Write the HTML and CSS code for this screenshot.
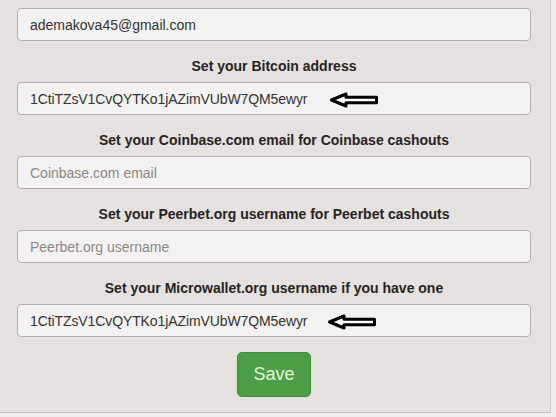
FILE: index.html
```html
<!DOCTYPE html>
<html>
<head>
<meta charset="utf-8">
<link rel="stylesheet" href="styles.css">
</head>
<body>
<div class="panel">
  <form class="form">
    <div class="field first">
      <div class="input"><span class="value">ademakova45@gmail.com</span></div>
    </div>
    <div class="field">
      <label class="label">Set your Bitcoin address</label>
      <div class="input">
        <span class="value addr">1CtiTZsV1CvQYTKo1jAZimVUbW7QM5ewyr</span>
        <svg class="arrow" width="50" height="16" viewBox="0 0 50 16"><path d="M2.5 8 L17 2 L17 5.2 L47.5 5.2 L47.5 10.8 L17 10.8 L17 14 Z" fill="#fff" stroke="#000" stroke-width="3" stroke-linejoin="round"/></svg>
      </div>
    </div>
    <div class="field">
      <label class="label">Set your Coinbase.com email for Coinbase cashouts</label>
      <div class="input"><span class="placeholder">Coinbase.com email</span></div>
    </div>
    <div class="field">
      <label class="label">Set your Peerbet.org username for Peerbet cashouts</label>
      <div class="input"><span class="placeholder">Peerbet.org username</span></div>
    </div>
    <div class="field">
      <label class="label">Set your Microwallet.org username if you have one</label>
      <div class="input">
        <span class="value addr">1CtiTZsV1CvQYTKo1jAZimVUbW7QM5ewyr</span>
        <svg class="arrow arrow2" width="50" height="16" viewBox="0 0 50 16"><path d="M2.5 8 L17 2 L17 5.2 L47.5 5.2 L47.5 10.8 L17 10.8 L17 14 Z" fill="#fff" stroke="#000" stroke-width="3" stroke-linejoin="round"/></svg>
      </div>
    </div>
    <div class="actions">
      <button type="button" class="save">Save</button>
    </div>
  </form>
</div>
</body>
</html>
```
FILE: styles.css
```css
html, body {
  margin: 0;
  padding: 0;
  background: #efeeec;
}
body {
  font-family: "Liberation Sans", Arial, sans-serif;
  width: 556px;
  height: 417px;
  overflow: hidden;
}
.panel {
  width: 550px;
  height: 412px;
  background: #e4e1de;
  border-right: 1px solid #c9c6c3;
  border-bottom: 1px solid #c0bdba;
  box-sizing: content-box;
}
.form {
  display: flex;
  flex-direction: column;
  padding: 8px 0 0 17px;
  width: 514px;
}
.field {
  display: flex;
  flex-direction: column;
  margin-top: 16px;
}
.field.first {
  margin-top: 0;
}
.label {
  font-weight: bold;
  font-size: 14px;
  line-height: 18px;
  color: #28231f;
  text-align: center;
  margin-bottom: 7px;
}
.input {
  position: relative;
  height: 33px;
  box-sizing: border-box;
  border: 1px solid #b2afac;
  border-radius: 4px;
  background: #f3f2f0;
  display: flex;
  align-items: center;
  padding: 0 12px;
  font-size: 14px;
}
.value {
  color: #333;
}
.addr {
  letter-spacing: -0.1px;
}
.placeholder {
  color: #8a8784;
}
.arrow {
  position: absolute;
  left: 311px;
  top: 9px;
}
.arrow2 {
  left: 309px;
  top: 9px;
}
.actions {
  display: flex;
  justify-content: center;
  margin-top: 15px;
}
.save {
  width: 74px;
  height: 45px;
  border: 1px solid #3e8a3a;
  border-radius: 5px;
  background: #4b9e46;
  color: #e3f2da;
  font-family: "Liberation Sans", Arial, sans-serif;
  font-size: 18px;
  padding: 0;
}
```
